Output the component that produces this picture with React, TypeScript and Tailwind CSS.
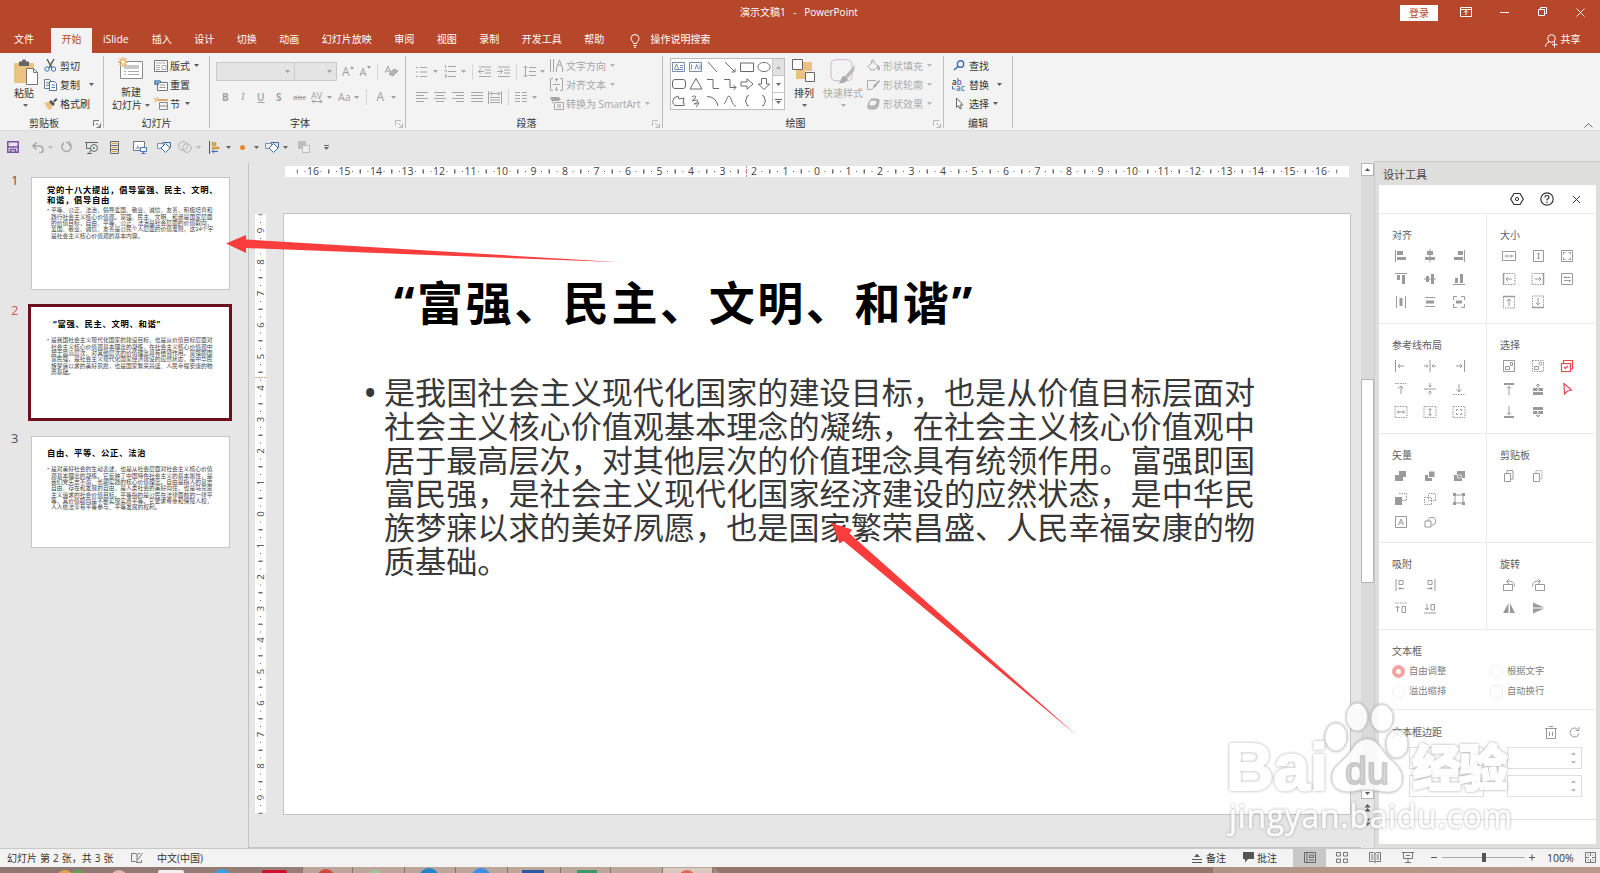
import type { ReactNode } from "react";

const TABS = ["插入", "设计", "切换", "动画", "幻灯片放映", "审阅", "视图", "录制", "开发工具", "帮助"];

const SLIDES = [
  {
    title: ["党的十八大提出，倡导富强、民主、文明、", "和谐，倡导自由"],
    body: [
      "平等、公正、法治，倡导爱国、敬业、诚信、友善，积极培育和",
      "践行社会主义核心价值观。富强、民主、文明、和谐是国家层面",
      "的价值目标，自由、平等、公正、法治是社会层面的价值取向，",
      "爱国、敬业、诚信、友善是公民个人层面的价值准则，这24个字",
      "是社会主义核心价值观的基本内容。",
    ],
  },
  {
    title: ["“富强、民主、文明、和谐”"],
    body: [
      "是我国社会主义现代化国家的建设目标，也是从价值目标层面对",
      "社会主义核心价值观基本理念的凝练，在社会主义核心价值观中",
      "居于最高层次，对其他层次的价值理念具有统领作用。富强即国",
      "富民强，是社会主义现代化国家经济建设的应然状态，是中华民",
      "族梦寐以求的美好夙愿，也是国家繁荣昌盛、人民幸福安康的物",
      "质基础。",
    ],
  },
  {
    title: ["自由、平等、公正、法治"],
    body: [
      "是对美好社会的生动表述，也是从社会层面对社会主义核心价值",
      "观基本理念的凝练。它反映了中国特色社会主义的基本属性，是",
      "我们党矢志不渝、长期实践的核心价值理念。自由是指人的意志",
      "自由、存在和发展的自由，是人类社会的美好向往，也是马克思",
      "主义追求的社会价值目标。平等指的是公民在法律面前的一律平",
      "等，其价值取向是不断实现实质平等。它要求尊重和保障人权，",
      "人人依法享有平等参与、平等发展的权利。",
    ],
  },
];

type SvgProps = { w: number; h: number; className?: string; children: ReactNode };

function Svg({ w, h, className = "", children }: SvgProps) {
  return (
    <svg
      width={w}
      height={h}
      viewBox={`0 0 ${w} ${h}`}
      fill="none"
      stroke="currentColor"
      className={`shrink-0 ${className}`}
      aria-hidden="true"
    >
      {children}
    </svg>
  );
}

function Caret({ className = "" }: { className?: string }) {
  return (
    <Svg w={5} h={3} className={className}>
      <path d="M0 0h5L2.5 3z" fill="currentColor" stroke="none" />
    </Svg>
  );
}

function Launcher({ className = "" }: { className?: string }) {
  return (
    <Svg w={8} h={8} className={className}>
      <path d="M.5 6V.5H6M3 3l4 4M7.5 3.5v4h-4" />
    </Svg>
  );
}

function Sep({ className = "" }: { className?: string }) {
  return <span className={`h-4 w-px shrink-0 bg-[#d5d5d5] ${className}`} />;
}

/* ---------- title bar and tabs ---------- */

function TitleBar() {
  return (
    <div className="flex h-7 items-start text-[10px] leading-6 text-white">
      <div className="w-[1400px] pl-[740px] whitespace-pre [word-spacing:1.2px]">演示文稿1  -  PowerPoint</div>
      <button className="mt-[5px] h-4 w-[38px] bg-white text-center leading-4 text-[#b7472a]">登录</button>
      <Svg w={12} h={10} className="mt-[7px] ml-[22px]">
        <path d="M.5.5h11v9H.5zM.5 2.5h11M6 8V4M4 5.5l2-2 2 2" />
      </Svg>
      <Svg w={9} h={10} className="mt-[7px] ml-[28px]">
        <path d="M0 5.5h9" />
      </Svg>
      <Svg w={10} h={10} className="mt-[7px] ml-[29px]">
        <path d="M.5 2.5h6v6h-6zM2.5 2.5v-2h6v6h-2" />
      </Svg>
      <Svg w={9} h={9} className="mt-[8px] ml-[28px]">
        <path d="M.5.5l8 8M8.500.5l-8 8" />
      </Svg>
    </div>
  );
}

function TabBar() {
  return (
    <div className="flex h-[25px] text-[10px] leading-[23px] text-white">
      <div className="w-[51px] pl-[14px]">文件</div>
      <div className="w-[41px] bg-[#f3f3f3] text-center text-[#b7472a]">开始</div>
      <div className="w-[48.500px] pl-[11px] text-[10.3px]">iSlide</div>
      {TABS.map((tab) => (
        <div key={tab} className="px-[11.250px]">
          {tab}
        </div>
      ))}
      <Svg w={10} h={14} className="mt-[6px] ml-[14px]">
        <path d="M3.500 9.500C3.500 7.500 1 7 1 4.500a4 4 0 0 1 8 0c0 2.500-2.500 3-2.500 5zM3.500 11.500h3M4 13.300h2" />
      </Svg>
      <div className="ml-[11px] w-[894px]">操作说明搜索</div>
      <Svg w={13} h={14} className="mt-[6px]">
        <circle cx="6.500" cy="4.500" r="3.800" />
        <path d="M.5 13c0-3 1.500-4.500 4-5M9.500 8v5.500M7 10.700h5.500" />
      </Svg>
      <div className="ml-[3px]">共享</div>
    </div>
  );
}

/* ---------- ribbon ---------- */

type GroupProps = { width: string; label: string; launcher?: "dark" | "light"; children: ReactNode };

function Group({ width, label, launcher, children }: GroupProps) {
  return (
    <section className={`flex h-[78px] shrink-0 items-center ${width}`}>
      <div className="flex h-full min-w-0 flex-1 flex-col">
        <div className="flex h-[62px] pt-[3px]">{children}</div>
        <div className="flex h-4 items-center">
          <span className={`flex-1 text-center ${launcher ? "pr-[5px]" : ""}`}>{label}</span>
          {launcher === "dark" && <Launcher className="mt-0.5 mr-[2px] text-[#777]" />}
          {launcher === "light" && <Launcher className="mt-0.5 mr-[2px] text-[#bbb]" />}
        </div>
      </div>
      <span className="h-[72px] w-px bg-[#bdbdbd]" />
    </section>
  );
}

function Tool({ icon, text, caret = "", className = "" }: { icon: ReactNode; text: string; caret?: string; className?: string }) {
  return (
    <div className={`flex h-[19px] items-center whitespace-nowrap ${className}`}>
      <span className="flex w-4 shrink-0">{icon}</span>
      {text}
      {caret && <Caret className={`opacity-80 ${caret}`} />}
    </div>
  );
}

function ClipboardGroup() {
  return (
    <Group width="w-[104px]" label="剪贴板" launcher="dark">
      <div className="flex w-11 flex-col items-start pl-[14px]">
        <Svg w={24} h={26} className="mt-[3px]">
          <path d="M0 4h20v20H0z" fill="#eac282" stroke="none" />
          <path d="M5 2.500h3V.8h4v1.700h3V7H5z" fill="#666" stroke="none" />
          <path d="M12.500 9.500h7l4 4v12h-11z" fill="#fff" stroke="#777" />
          <path d="M19.500 9.500v4h4" stroke="#777" />
        </Svg>
        <span className="mt-[1px] leading-[14px]">粘贴</span>
        <Caret className="mt-[4px] ml-[9px] text-[#666]" />
      </div>
      <div>
        <Tool
          text="剪切"
          icon={
            <Svg w={13} h={13}>
              <path d="M3 0l5 9M10 0L5 9" stroke="#555" strokeWidth="1.400" />
              <circle cx="3" cy="10" r="2.200" stroke="#3b78b5" />
              <circle cx="9.500" cy="10" r="2.200" stroke="#3b78b5" />
            </Svg>
          }
        />
        <Tool
          text="复制"
          caret="ml-[9px]"
          icon={
            <Svg w={14} h={12}>
              <path d="M.5.5h5l2 2v7h-7zM2 4h3M2 6.500h3" stroke="#6b7f96" />
              <path d="M5.500 2.500h5l2 2v7h-7z" fill="#fff" stroke="#5a7594" />
              <path d="M7.500 6h3.500M7.500 8.500h3.500" stroke="#3b78b5" />
            </Svg>
          }
        />
        <Tool
          text="格式刷"
          icon={
            <Svg w={14} h={12}>
              <path d="M0 5l5-1 4 4-3 4-2-1z" fill="#eac282" stroke="none" />
              <path d="M5 4l2-2 4 4-2 2zM9 3l3-3 1.500 1.500-3 3z" fill="#555" stroke="none" />
            </Svg>
          }
        />
      </div>
    </Group>
  );
}

function SlidesGroup() {
  return (
    <Group width="w-[106px]" label="幻灯片">
      <div className="flex w-[50px] flex-col pl-2">
        <Svg w={26} h={24} className="mt-[1px] ml-[6px]">
          <path d="M2.500 4.500h22v17h-22z" fill="#fff" stroke="#8a8a8a" />
          <path d="M6 8h15v4H6z" fill="#c9c9c9" stroke="none" />
          <path d="M6 14.500h2M10 14.500h11M6 17.500h2M10 17.500h11" stroke="#aaa" />
          <path d="M5 0v10M0 5h10M1.500 1.500l7 7M8.500 1.500l-7 7" stroke="#e5a84c" strokeWidth="1.300" />
          <circle cx="5" cy="5" r="1.800" fill="#fff" stroke="none" />
        </Svg>
        <span className="mt-[5px] ml-[9px] leading-[13px]">新建</span>
        <span className="flex items-center leading-[13px] whitespace-nowrap">
          幻灯片
          <Caret className="ml-[3px] text-[#666]" />
        </span>
      </div>
      <div>
        <Tool
          text="版式"
          caret="ml-[4px]"
          icon={
            <Svg w={14} h={12}>
              <path d="M.5.5h13v11H.5z" fill="#fff" stroke="#777" />
              <path d="M2 3h10M2 5.500h4M2 7.500h4M2 9.500h4M8 5.500h4v4H8z" stroke="#999" strokeWidth=".8" />
            </Svg>
          }
        />
        <Tool
          text="重置"
          icon={
            <Svg w={14} h={12}>
              <path d="M3.500 3.500h10v8h-10z" fill="#fff" stroke="#777" />
              <path d="M5.500 6h6M5.500 8.500h6" stroke="#999" />
              <path d="M1 5c0-3 4-4.500 6-2M1 1v4h4" stroke="#3b78b5" strokeWidth="1.300" />
            </Svg>
          }
        />
        <Tool
          text="节"
          caret="ml-[5px]"
          icon={
            <Svg w={14} h={13}>
              <path d="M4 3h10" stroke="#d98f3e" strokeWidth="1.500" />
              <path d="M5.500 5.500h8v7h-8zM5.500 9h8" stroke="#888" />
              <path d="M0 1l4 3M4 0L1 5" stroke="#e5a84c" />
            </Svg>
          }
        />
      </div>
    </Group>
  );
}

function FontGroup() {
  return (
    <Group width="w-[196px]" label="字体" launcher="light">
      <div className="w-full pl-[6px] text-[#a0a0a0]">
        <div className="mt-[6px] flex h-[19px] items-center">
          <div className="flex h-[19px] w-[79px] items-center justify-end border border-[#cacaca] bg-[#e4e4e4] pr-1">
            <Caret />
          </div>
          <div className="-ml-px flex h-[19px] w-[43px] items-center justify-end border border-[#cacaca] bg-[#e4e4e4] pr-1">
            <Caret />
          </div>
          <span className="ml-[5px] text-[12px]">A</span>
          <Svg w={4} h={3} className="-mt-2">
            <path d="M0 3l2-3 2 3z" fill="currentColor" stroke="none" />
          </Svg>
          <span className="ml-[6px] text-[11px]">A</span>
          <Svg w={4} h={3} className="-mt-2">
            <path d="M0 0l2 3 2-3z" fill="currentColor" stroke="none" />
          </Svg>
          <Sep className="ml-[6px]" />
          <Svg w={13} h={13} className="ml-[7px]">
            <path d="M0 8l3-7 3 7M1 6h4" />
            <path d="M4 9l5-5 4 2-5 5z" fill="#b5b5b5" />
          </Svg>
        </div>
        <div className="mt-[7px] flex h-[18px] items-center text-[10px] whitespace-nowrap">
          <b className="ml-[6px] w-[17px]">B</b>
          <i className="w-[18px] font-serif">&nbsp;I</i>
          <span className="w-[19px] font-semibold underline">U</span>
          <b className="w-[17px]">S</b>
          <span className="w-[18px] text-[8px] line-through">abc</span>
          <span className="flex flex-col">
            <span className="h-[8px] text-[9px] leading-[9px]">AV</span>
            <Svg w={12} h={5}>
              <path d="M1 2.500h10M3 .5l-2 2 2 2M9 .5l2 2-2 2" />
            </Svg>
          </span>
          <Caret className="ml-[4px]" />
          <span className="ml-[6px] text-[10.500px]">Aa</span>
          <Caret className="ml-[4px]" />
          <Sep className="ml-[7px]" />
          <span className="ml-[9px] text-[12px]">A</span>
          <Caret className="ml-[7px]" />
        </div>
      </div>
    </Group>
  );
}

function ParagraphGroup() {
  return (
    <Group width="w-[257px]" label="段落" launcher="light">
      <div className="flex w-full text-[#a6a6a6]">
        <div className="w-[144px] shrink-0 pl-[10px]">
          <div className="mt-[6px] flex h-[19px] items-center">
            <Svg w={12} h={12}>
              <path d="M0 1.500h2M4 1.500h7M0 6h2M4 6h7M0 10.500h2M4 10.500h7" strokeWidth="1.200" />
            </Svg>
            <Caret className="ml-[5px]" />
            <Svg w={12} h={13} className="ml-[6px]">
              <path d="M1.500 0v3M4 1.500h8M.5 5.500h2v2M4 6.500h8M.5 10h2v2h-2M4 11.500h8" />
            </Svg>
            <Caret className="ml-[5px]" />
            <Sep className="ml-[6px]" />
            <Svg w={14} h={12} className="ml-[5px]">
              <path d="M1 1h12M7 4h6M7 7h6M1 10.500h12M0 5.500h6M3 3L.5 5.500 3 8" />
            </Svg>
            <Svg w={14} h={12} className="ml-[5px]">
              <path d="M1 1h12M7 4h6M7 7h6M1 10.500h12M0 5.500h6M3 3l2.500 2.500L3 8" />
            </Svg>
            <Sep className="ml-[5px]" />
            <Svg w={13} h={13} className="ml-[6px]">
              <path d="M2.500 1v11M.5 3l2-2 2 2M.5 10l2 2 2-2M6 2.500h7M6 6.500h7M6 10.500h7" />
            </Svg>
            <Caret className="ml-[4px]" />
          </div>
          <div className="mt-[7px] flex h-[18px] items-center">
            <Svg w={12} h={10}>
              <path d="M0 .5h12M0 3.500h8M0 6.500h12M0 9.500h8" />
            </Svg>
            <Svg w={12} h={10} className="ml-[6px]">
              <path d="M0 .5h12M2 3.500h8M0 6.500h12M2 9.500h8" />
            </Svg>
            <Svg w={12} h={10} className="ml-[6px]">
              <path d="M0 .5h12M4 3.500h8M0 6.500h12M4 9.500h8" />
            </Svg>
            <Svg w={12} h={10} className="ml-[7px]">
              <path d="M0 .5h12M0 3.500h12M0 6.500h12M0 9.500h12" />
            </Svg>
            <Svg w={14} h={13} className="ml-[5px]">
              <path d="M.5 0v13M13.500 0v13M2 2.500h10M4 .5l-2 2 2 2M10 .5l2 2-2 2M2 6.500h10M2 9h10M2 11.500h10" />
            </Svg>
            <Sep className="ml-[6px]" />
            <Svg w={12} h={10} className="ml-[6px]">
              <path d="M0 .5h5M7 .5h5M0 3.500h5M7 3.500h5M0 6.500h5M7 6.500h5M0 9.500h5M7 9.500h5" />
            </Svg>
            <Caret className="ml-[5px]" />
          </div>
        </div>
        <div>
          <Tool
            text="文字方向"
            caret="ml-[4px]"
            icon={
              <Svg w={13} h={13}>
                <path d="M.5 0v13M3.500 0v13M6.500 8v5M7 8l2.500-7L12 8M8 6h3M12.500 8v5" />
              </Svg>
            }
          />
          <Tool
            text="对齐文本"
            caret="ml-[4px]"
            icon={
              <Svg w={13} h={13}>
                <path d="M3 .5H.5v12H3M10 .5h2.500v12H10M3 6.500h7M6.500 0v4M5 2l1.500-1.500L8 2M6.500 9v4M5 11l1.500 1.500L8 11" />
              </Svg>
            }
          />
          <Tool
            text="转换为 SmartArt"
            caret="ml-[4px]"
            icon={
              <Svg w={14} h={13}>
                <path d="M0 0h9l2 3-3 1H3v3z" fill="#a6a6a6" stroke="none" />
                <path d="M4.500 5.500h9v7h-9zM7 8h4M7 10h4" />
              </Svg>
            }
          />
        </div>
      </div>
    </Group>
  );
}

// Insertable shapes, row by row, each on a 14x12 canvas.
const SHAPES = [
  "M.5 1.500h12v9H.5zM2.500 8l2-5 2 5M8 4.500h3M8 6.500h3M2.500 8.500h8.500",
  "M.5 1.500h12v9H.5zM2.500 3.500v5M6 8.500l1.700-5 1.700 5M11 3.500v5",
  "M2 1l9 10",
  "M2 1l10 10M12 7.500V11H8.500",
  "M.5 2h13v8.500H.5z",
  "M7 1.500c8 0 8 9 0 9s-8-9 0-9z",
  "M3 1.500h8q2.500 0 2.500 2.500v4q0 2.500-2.500 2.500H3Q.5 10.500.5 8V4Q.5 1.500 3 1.500z",
  "M7 .5l6 10.500H1z",
  "M1 1.500h6v9h6",
  "M1 1.500h6v8h6M10.500 7l2.500 2.500L10.500 12",
  "M1 4h6V.8L13 6l-6 5.200V8H1z",
  "M4.500.5h5V6h3.200L7 11.500 1.300 6h3.200z",
  "M2 3l4-2 1 3 5-1-1 5q2 0 1 2.500H3Q-1 8 2 3z",
  "M3 2c4-3 5 1 1 3s5-1 5 1-6 3-3 3 2-2 4-1l-3 4",
  "M1 1.500q9 0 11 9.500",
  "M1 9c2-1 3-8 5-8s3 10 7 10",
  "M9 .5Q6.500.5 6.500 3T5 6q1.500 0 1.500 2.500T9 11",
  "M5 .5Q7.500.5 7.500 3T9 6Q7.500 6 7.500 8.500T5 11",
];

function DrawingGroup() {
  return (
    <Group width="w-[281px]" label="绘图" launcher="light">
      <div className="mt-[2px] ml-[7px] flex h-[52px] w-[115px] shrink-0 border border-[#bcbcbc] bg-white text-[#6a6a6a]">
        <div className="grid w-[101px] shrink-0 grid-cols-6 place-items-center">
          {SHAPES.map((d, i) => (
            <Svg key={d} w={14} h={12} className={i < 2 ? "text-[#54749b]" : ""}>
              <path d={d} strokeWidth={i < 2 ? 0.8 : 1} />
            </Svg>
          ))}
        </div>
        <div className="flex flex-1 flex-col divide-y divide-[#c6c6c6] border-l border-[#c6c6c6]">
          <span className="flex flex-1 items-center justify-center bg-[#e2e2e2] text-[#aaa]">
            <Caret className="rotate-180" />
          </span>
          <span className="flex flex-1 items-center justify-center">
            <Caret />
          </span>
          <span className="flex flex-1 flex-col items-center justify-center gap-px">
            <span className="h-px w-[7px] bg-[#666]" />
            <Caret />
          </span>
        </div>
      </div>
      <div className="flex w-[36px] shrink-0 flex-col items-center pl-[2px]">
        <Svg w={24} h={24} className="mt-[3px]">
          <path d="M11 3h9v9h-9zM4 11h9v9H4z" fill="#eac282" stroke="none" />
          <path d="M.5.5h10v10H.5zM13.500 13.500h9v9h-9z" fill="#fff" stroke="#666" />
        </Svg>
        <span className="mt-[3px] leading-[14px]">排列</span>
        <Caret className="mt-[4px] text-[#666]" />
      </div>
      <div className="flex w-[44px] shrink-0 flex-col items-center whitespace-nowrap text-[#ababab]">
        <Svg w={26} h={26} className="mt-[3px]">
          <path d="M6 .7h11q5 0 5 5v11q0 5-5 5H6q-5 0-5-5v-11q0-5 5-5z" stroke="#c9bcc8" />
          <path d="M25 6l-1 6-6 7-3-2z" fill="#b9b9b9" stroke="none" />
          <path d="M15 17l3 3q-2 5-10 4 3-1 3-4 1-3 4-3z" fill="#aaa" stroke="none" />
        </Svg>
        <span className="mt-[1px] leading-[14px]">快速样式</span>
        <Caret className="mt-[4px]" />
      </div>
      <div className="ml-[2px] text-[#ababab]">
        <Tool
          text="形状填充"
          caret="ml-[4px]"
          icon={
            <Svg w={13} h={13}>
              <path d="M1 7.500l5-5 5 5-4 3.500H4zM4.500 4V1.500Q5.500 0 7 1.500V3" />
              <path d="M11 6l2 4-2 1z" fill="currentColor" />
            </Svg>
          }
        />
        <Tool
          text="形状轮廓"
          caret="ml-[4px]"
          icon={
            <Svg w={13} h={12}>
              <path d="M9 1.500H.5v9H4L10 6" />
              <path d="M6 7l6-6 1 1.500-6 6z" fill="currentColor" stroke="none" />
            </Svg>
          }
        />
        <Tool
          text="形状效果"
          caret="ml-[4px]"
          icon={
            <Svg w={13} h={12}>
              <path d="M4 1h6q3 0 2 3l-1 4q-1 3-3 3H2Q0 10 1 7z" fill="#b8b8b8" />
              <path d="M4 2h4q3 0 2 3T6 8H3Q1 8 2 5t2-3z" fill="#f3f3f3" />
            </Svg>
          }
        />
      </div>
    </Group>
  );
}

function EditingGroup() {
  return (
    <Group width="w-[69px]" label="编辑">
      <div className="pl-[9px]">
        <Tool
          text="查找"
          icon={
            <Svg w={12} h={11}>
              <circle cx="7.500" cy="4" r="3.200" stroke="#3b6fb5" strokeWidth="1.400" />
              <path d="M5 6.500L1 10" stroke="#3b6fb5" strokeWidth="1.600" />
            </Svg>
          }
        />
        <Tool
          text="替换"
          caret="ml-[8px]"
          icon={
            <span className="-ml-px flex flex-col text-[8px] leading-[6px] font-semibold">
              <span>
                a<span className="text-[#8a4fb0]">b</span>
              </span>
              <span className="flex text-[#3b78b5]">
                <Svg w={4} h={6}>
                  <path d="M.5 1v3H3" />
                </Svg>
                ac
              </span>
            </span>
          }
        />
        <Tool
          text="选择"
          caret="ml-[4px]"
          icon={
            <Svg w={12} h={13}>
              <path d="M3.500 1v9.500l2-2 1.500 3.500 1.500-.7L7 8h3z" fill="#fff" stroke="#666" />
            </Svg>
          }
        />
      </div>
    </Group>
  );
}

function Ribbon() {
  return (
    <div className="flex h-[78px] border-b border-[#dadada] bg-[#f3f3f3] text-[10px] leading-4 text-[#333]">
      <ClipboardGroup />
      <SlidesGroup />
      <FontGroup />
      <ParagraphGroup />
      <DrawingGroup />
      <EditingGroup />
      <Svg w={9} h={5} className="mt-[70px] ml-[571px]">
        <path d="M.5 4.500l4-4 4 4" stroke="#666" />
      </Svg>
    </div>
  );
}

function QuickAccess() {
  return (
    <div className="flex h-8 items-center text-[#666]">
      <Svg w={12} h={12} className="ml-[7px]">
        <path d="M.8.8h10.400v10.400H.8zM.8 6h10.400M3.500 11V8.500h5V11" stroke="#7a4fa8" strokeWidth="1.500" />
      </Svg>
      <Svg w={12} h={11} className="ml-[13px] text-[#a9a9a9]">
        <path d="M1 4h6q4 0 4 3.500T7 11M4.500.5L1 4l3.500 3.500" strokeWidth="1.600" />
      </Svg>
      <Caret className="ml-[4px] text-[#bbb]" />
      <Svg w={11} h={12} className="ml-[8px] text-[#a9a9a9]">
        <path d="M3 2a4.600 4.600 0 1 0 5 0M8.500 5V1.500H5" strokeWidth="1.500" />
      </Svg>
      <Svg w={13} h={13} className="ml-[13px]">
        <path d="M0 1.500h13M1.500 1.500v6h4M3.500 12.500L6 9M2 12.500h5" />
        <circle cx="9" cy="7" r="3.500" fill="#e6e6e6" />
        <path d="M8 5.500l2.500 1.500L8 8.500z" fill="#4a9a80" stroke="none" />
      </Svg>
      <Svg w={9} h={13} className="ml-[12px]">
        <path d="M.5.500h8v12h-8zM.5 4.500h8M.5 8.500h8" />
        <path d="M2 2.500h5M2 6.500h5M2 10.500h5" stroke="#e0a040" />
      </Svg>
      <Svg w={14} h={13} className="ml-[14px]">
        <path d="M.5.500h11v9H.5z" fill="#fff" stroke="#777" />
        <path d="M2 8l3-4 3 4z" fill="#bbb" stroke="none" />
        <path d="M7.500 6.500h6v4h-6zM10.500 10.500v2M8.500 12.500h4" fill="#fff" stroke="#3b78b5" />
      </Svg>
      <Svg w={14} h={12} className="ml-[10px]">
        <path d="M5.500 1.500h8v5l-3 2" stroke="#3b6fa5" />
        <path d="M.5 2.500h6v5h-6z" fill="#eef3fa" stroke="#7d93ad" />
        <path d="M4 7l4.500-4.500L13 7l-4.500 4.500z" fill="#fff" stroke="#3b6fa5" />
      </Svg>
      <Svg w={14} h={12} className="ml-[7px] text-[#b3b3b3]">
        <circle cx="5" cy="5" r="4.300" />
        <circle cx="9" cy="7" r="4.300" />
      </Svg>
      <Caret className="ml-[4px] text-[#bbb]" />
      <Svg w={11} h={13} className="ml-[8px]">
        <path d="M.5 0v13" stroke="#555" />
        <path d="M3 1.500h4v3H3zM3 6h7v2H3z" fill="#e0a040" stroke="#c99b50" strokeWidth=".7" />
        <path d="M3 10.500h6M5 8.500l-2 2 2 2" stroke="#3b6fa5" />
      </Svg>
      <Caret className="ml-[6px]" />
      <span className="ml-[9px] size-[5px] rounded-full bg-[#e8862e]" />
      <Caret className="ml-[9px]" />
      <Svg w={14} h={12} className="ml-[6px]">
        <path d="M5.500 1.500h8v5l-3 2" stroke="#3b6fa5" />
        <path d="M.5 2.500h6v5h-6z" fill="#eef3fa" stroke="#7d93ad" />
        <path d="M4 7l4.500-4.500L13 7l-4.500 4.500z" fill="#fff" stroke="#3b6fa5" />
      </Svg>
      <Caret className="ml-[4px]" />
      <Svg w={12} h={12} className="ml-[10px]">
        <path d="M.5.500h7v7h-7z" fill="#bdbdbd" stroke="#bdbdbd" />
        <path d="M4.500 4.500h7v7h-7z" fill="#eee" stroke="#bdbdbd" />
      </Svg>
      <span className="ml-[14px] flex flex-col items-center gap-px">
        <span className="h-px w-[5px] bg-[#666]" />
        <Caret />
      </span>
    </div>
  );
}

/* ---------- slide pane ---------- */

function Thumb({ index, frame, titleClass, bodyClass }: { index: number; frame: string; titleClass: string; bodyClass: string }) {
  const slide = SLIDES[index];
  return (
    <div className={`bg-white whitespace-nowrap ${frame}`}>
      <div className={`text-[8.300px] leading-[10.400px] font-bold tracking-[0.720px] text-black ${titleClass}`}>
        {slide.title.map((line) => (
          <div key={line}>{line}</div>
        ))}
      </div>
      <div className={`flex text-[5.780px] leading-[6.300px] text-[#444] ${bodyClass}`}>
        <span className="w-[4px]">•</span>
        <div>
          {slide.body.map((line) => (
            <div key={line}>{line}</div>
          ))}
        </div>
      </div>
    </div>
  );
}

function ThumbPane() {
  return (
    <div className="w-[248px] shrink-0 text-[13px] leading-4 text-[#555]">
      <div className="flex pt-[14px]">
        <span className="-mt-[5px] w-[31px] pl-[11px]">1</span>
        <Thumb index={0} frame="h-[113px] w-[199px] border border-[#c6c6c6]" titleClass="pt-[6.500px] pl-[15px]" bodyClass="pt-[2px] pl-[15px]" />
      </div>
      <div className="mt-[14px] flex">
        <span className="-mt-[2px] w-[28px] pl-[11px] text-[#d0574a]">2</span>
        <Thumb index={1} frame="h-[117px] w-[204px] border-3 border-[#6d0f1c]" titleClass="pt-[12px] pl-[22px]" bodyClass="pt-[8px] pl-[16px]" />
      </div>
      <div className="mt-[15px] flex">
        <span className="-mt-[6px] w-[31px] pl-[11px]">3</span>
        <Thumb index={2} frame="h-[112px] w-[199px] border border-[#c6c6c6]" titleClass="pt-[11px] pl-[15px]" bodyClass="pt-[8px] pl-[15px]" />
      </div>
    </div>
  );
}

/* ---------- rulers and editing canvas ---------- */

const UNIT = 31.5;

function RulerMarks({ count, middle, turned }: { count: number; middle: number; turned?: boolean }) {
  const marks = Array.from({ length: count * 2 + 1 }, (_, i) => i - count);
  return (
    <>
      {marks.map((n) => {
        const at = middle + n * UNIT;
        return (
          <g key={n}>
            <text x={at} y={turned ? 8.5 : 8.7} textAnchor="middle" fontSize={turned ? 9.5 : 10.5} fill="#444" stroke="none">
              {Math.abs(n)}
            </text>
            <path d={`M${at - 8.5} 5.500h1M${at + 7.5} 5.500h1M${at + UNIT / 2} 3.500v4M${at - UNIT / 2} 3.500v4`} stroke="#666" />
          </g>
        );
      })}
    </>
  );
}

function Editor() {
  const slide = SLIDES[1];
  return (
    <div className="flex w-[1113px] shrink-0 flex-col border-b border-l border-[#c3c3c3]">
      <div className="mt-[3px] ml-[36px] h-[11px] w-[1064px] bg-white">
        <Svg w={1064} h={11} className="overflow-visible">
          <RulerMarks count={16} middle={532} />
          <path d="M461.500 0v11" stroke="#d98080" strokeDasharray="2 1" />
        </Svg>
      </div>
      <div className="mt-[37px] flex">
        <div className="ml-[6px] h-[599px] w-[11px] bg-white">
          <Svg w={11} h={599} className="overflow-visible">
            <g transform="translate(0 599) rotate(-90)">
              <RulerMarks count={9} middle={299} turned />
            </g>
            <path d="M0 163.500h11" stroke="#d9a080" strokeDasharray="2 1" />
          </Svg>
        </div>
        <div className="-mt-px ml-[17px] h-[602px] w-[1068px] border border-[#c3c3c3] bg-white whitespace-nowrap">
          <h1 className="mt-[56px] ml-[110px] text-[46px] leading-[64px] font-bold tracking-[2.600px] text-black">
            {slide.title[0]}
          </h1>
          <div className="mt-[42px] ml-[79px] flex text-[31.120px] leading-[33.800px] text-[#383838]">
            <span className="w-[21px] text-[38px]">•</span>
            <div>
              {slide.body.map((line) => (
                <div key={line}>{line}</div>
              ))}
            </div>
          </div>
        </div>
      </div>
    </div>
  );
}

function ScrollBar() {
  return (
    <div className="flex w-[13px] shrink-0 flex-col items-center text-[#555]">
      <div className="flex h-[13px] w-full items-center justify-center border border-[#b5b5b5] bg-white">
        <Caret className="rotate-180" />
      </div>
      <div className="flex h-[611px] w-full flex-col bg-[#dadada] pt-[203px]">
        <div className="h-[204px] border border-[#b5b5b5] bg-white" />
      </div>
      <div className="flex h-[12px] w-full items-center justify-center border border-[#b5b5b5] bg-white">
        <Caret />
      </div>
      <Svg w={7} h={8} className="mt-[5px]">
        <path d="M3.500 0l3 3.500h-6zM3.500 4l3 3.500h-6z" fill="currentColor" stroke="none" />
      </Svg>
      <Svg w={7} h={8} className="mt-[6px]">
        <path d="M3.500 4l3-3.500h-6zM3.500 8l3-3.500h-6z" fill="currentColor" stroke="none" />
      </Svg>
    </div>
  );
}

/* ---------- design tools panel ---------- */

const F = { fill: "currentColor", stroke: "none" };
const DASH = { strokeDasharray: "1.500 1" };

const ALIGN = [
  <path d="M1 1h1v12H1zM3 2h6v4H3zM3 8h9v3H3z" {...F} />,
  <path d="M6.500 0h1v13h-1zM4 2h6v4H4zM2 8h10v3H2z" {...F} />,
  <path d="M12 1h1v12h-1zM6 2h5v4H6zM2 8h9v3H2z" {...F} />,
  <path d="M1 1h12v1H1zM3 3h3v5H3zM8 3h3v9H8z" {...F} />,
  <path d="M1 6.500h12v1H1zM3 4h3v6H3zM8 2h3v10H8z" {...F} />,
  <path d="M1 12h12v1H1zM3 6h3v5H3zM8 2h3v9H8z" {...F} />,
  <path d="M2 1h1v12H2zM11 1h1v12h-1zM5.500 3h3v8h-3z" {...F} />,
  <path d="M2 2h10v1H2zM2 11h10v1H2zM3 5.500h8v3H3z" {...F} />,
  <>
    <path d="M5 1.500H1.500V5M9 1.500h3.500V5M1.500 9v3.500H5M12.500 9v3.500H9" />
    <path d="M4 5.500h6v3H4z" {...F} />
  </>,
];

const SIZE = [
  <path d="M.5 2.500h13v9H.5zM3.500 7h7M5 5.500L3.500 7 5 8.500M9 5.500L10.500 7 9 8.500" />,
  <path d="M2.500 1.500h10v11h-10zM7.500 4v6M6 5.500L7.500 4 9 5.500M6 8.500L7.500 10 9 8.500" />,
  <>
    <path d="M1.500 1.500h11v11h-11z" />
    <path d="M3.500 5.500v-2h2M8.500 3.500h2v2M3.500 8.500v2h2M8.500 10.500h2v-2" />
  </>,
  <>
    <path d="M1.500 1v12" strokeWidth="1.500" />
    <path d="M2 1.500h11v11H2" {...DASH} />
    <path d="M4 7h6M6 5L4 7l2 2" />
  </>,
  <>
    <path d="M12.500 1v12" strokeWidth="1.500" />
    <path d="M12 1.500H1v11h11" {...DASH} />
    <path d="M4 7h6M8 5l2 2-2 2" />
  </>,
  <path d="M1.500 1.500h11v11h-11zM4 5.500h6.500M5.500 4L4 5.500M10.500 8.500H4M9 10l1.500-1.500" />,
  <>
    <path d="M1 1.500h12" strokeWidth="1.500" />
    <path d="M1.500 2v11h11V2" {...DASH} />
    <path d="M7 11V4M5 6l2-2 2 2" />
  </>,
  <>
    <path d="M1 12.500h12" strokeWidth="1.500" />
    <path d="M1.500 12V1h11v11" {...DASH} />
    <path d="M7 3v7M5 8l2 2 2-2" />
  </>,
];

const GUIDES = [
  <path d="M1.500 1v12M4 7h6M6 5L4 7l2 2" />,
  <path d="M7 1v12M1 7h4M3.500 5.500L5 7 3.500 8.500M13 7H9M10.500 5.500L9 7l1.500 1.500" />,
  <path d="M12.500 1v12M4 7h6M8 5l2 2-2 2" />,
  <>
    <path d="M1 1.500h12" {...DASH} />
    <path d="M7 12V4M4.500 6.500L7 4l2.500 2.500" />
  </>,
  <path d="M1 7h12M7 1v4M5.500 3.500L7 5l1.500-1.500M7 13V9M5.500 10.500L7 9l1.500 1.500" />,
  <>
    <path d="M1 12.500h12" {...DASH} />
    <path d="M7 2v8M4.500 7.500L7 10l2.500-2.500" />
  </>,
  <>
    <path d="M1 1.500h12v11H1z" {...DASH} />
    <path d="M3.500 7h7M5 5.500L3.500 7 5 8.500M9 5.500L10.500 7 9 8.500" />
  </>,
  <>
    <path d="M1 1.500h12v11H1z" {...DASH} />
    <path d="M7 3.500v7M5.500 5L7 3.500 8.500 5M5.500 9L7 10.500 8.500 9" />
  </>,
  <>
    <path d="M1 1.500h12v11H1z" {...DASH} />
    <path d="M4.500 6V4.500H6M8 4.500h1.500V6M4.500 8v1.500H6M8 9.500h1.500V8" />
  </>,
];

const SELECT = [
  <path d="M1.500 1.500h11v11h-11zM3.500 7.500h4v3h-4zM8.500 3.500h2v3h-2z" />,
  <>
    <path d="M1.500 1.500h11v11h-11z" {...DASH} />
    <path d="M3.500 7.500h4v3h-4z" />
    <circle cx="9.500" cy="4.500" r="1.500" />
  </>,
  <path d="M1.500 4.500h9v8h-9zM3.500 4V1.500h9v8.500h-2M4 8l1.500 1.500L8 7" stroke="#e8474f" strokeWidth="1.200" />,
  <>
    <path d="M2 2h10" strokeWidth="2" />
    <path d="M7 13V4M5 6.500L7 4.500l2 2" />
  </>,
  <>
    <path d="M2 6h4v3H2zM8 6h4v3H8zM2 10h10v3H2z" {...F} />
    <path d="M7 9V2M5 4l2-2 2 2" />
  </>,
  <path d="M4 1.500L11.500 8 7.500 9 4.500 12z" stroke="#e8474f" strokeWidth="1.200" />,
  <>
    <path d="M2 12h10" strokeWidth="2" />
    <path d="M7 1v9M5 7.500l2 2 2-2" />
  </>,
  <>
    <path d="M2 2h10v3H2zM2 6h4v3H2zM8 6h4v3H8z" {...F} />
    <path d="M7 6v6M5 10l2 2 2-2" />
  </>,
];

const VECTOR = [
  <path d="M5 2h7v6H9v4H1V6h4z" {...F} />,
  <>
    <path d="M2 6h7v6H2z" {...F} />
    <path d="M5.500 2h6.500v6.500H5.500z" fill="currentColor" stroke="#fff" />
  </>,
  <>
    <path d="M5 2h8v7h-3v3H2V6h3z" {...F} />
    <path d="M5.500 6h4v3h-4z" stroke="#ddd" />
  </>,
  <>
    <path d="M1 5h7v8H1z" {...F} />
    <path d="M5 1.500h7.500v7H8" {...DASH} />
  </>,
  <>
    <path d="M1.500 5.500h7v7h-7z" {...DASH} />
    <path d="M5.500 1.500h7v7h-7z" {...DASH} />
  </>,
  <>
    <path d="M3 3h8v8H3z" />
    <path d="M1 1h3v3H1zM10 1h3v3h-3zM1 10h3v3H1zM10 10h3v3h-3z" {...F} />
  </>,
  <path d="M1.500 1.500h11v11h-11zM4.500 10L7 4l2.500 6M5.500 8h3" />,
  <>
    <path d="M2 6h6v6H2z" />
    <path d="M5 6a3.800 3.800 0 1 1 3.500 4" />
  </>,
];

const CLIPS = [
  <path d="M2.500 4.500h6v8h-6zM5 4V1.500h6V10H8.500" />,
  <>
    <path d="M2.500 4.500h6v8h-6z" />
    <path d="M5 4V1.500h6V10H8.500" stroke="#c4c4c4" />
  </>,
];

const SNAP = [
  <path d="M2 1v12M5 2.500h4v4H5zM10 10.500H5M6.500 9L5 10.500 6.500 12" />,
  <path d="M12 1v12M5 2.500h4v4H5zM4 10.500h5M7.500 9L9 10.500 7.500 12" />,
  <>
    <path d="M1 2h12" {...DASH} />
    <path d="M3.500 11V5M1.500 7l2-2 2 2M8 5.500h3.500v6H8z" />
  </>,
  <path d="M1 12h12M4 3v6M2 7l2 2 2-2M8 3.500h3.500V9H8z" />,
];

const ROTATE = [
  <path d="M1.500 6.500h9v6h-9zM5 3.500q7-2 7.500 5M7 1L4.500 3.500 7 6" />,
  <path d="M4.500 6.500h9v6h-9zM9 3.500Q2 1.500 1.500 8.500M7 1l2.500 2.500L7 6" />,
  <path d="M6.500 2v10H1zM8 2v10h5z" {...F} />,
  <path d="M2 1.500l11 5H2zM2 7.500h11l-11 5z" {...F} />,
];

function ToolGrid({ title, icons, wide = false }: { title: string; icons: ReactNode[]; wide?: boolean }) {
  return (
    <section className="pt-[13px] pl-[13px]">
      <h3 className="leading-4">{title}</h3>
      <div
        className={`mt-[6px] -ml-[6px] grid w-[88px] justify-items-center gap-y-[9px] text-[#9a9a9a] ${
          wide ? "grid-cols-[29px_29px]" : "grid-cols-3"
        }`}
      >
        {icons.map((icon, i) => (
          <Svg key={i} w={14} h={14}>
            {icon}
          </Svg>
        ))}
      </div>
    </section>
  );
}

function Radio({ label, on = false, square = false }: { label: string; on?: boolean; square?: boolean }) {
  return (
    <label className="flex h-5 items-center text-[9.300px] text-[#808080]">
      <span
        className={`mr-[4px] flex size-[13px] items-center justify-center border ${square ? "rounded-sm" : "rounded-full"} ${
          on ? "border-[#f5a3a0] bg-[#f5a3a0]" : "border-[#f0f0f0] bg-white"
        }`}
      >
        {on && <span className="size-[5px] rounded-full bg-white" />}
      </span>
      {label}
    </label>
  );
}

function Spinner({ className = "" }: { className?: string }) {
  return (
    <div className={`flex h-[22px] w-[75px] flex-col items-end justify-center gap-[6px] border border-[#dedede] bg-white pr-[5px] text-[#bdbdbd] ${className}`}>
      <Caret className="rotate-180" />
      <Caret />
    </div>
  );
}

function DesignPanel() {
  return (
    <aside className="-mt-[2px] flex w-[226px] shrink-0 flex-col border-t border-l border-[#c9c9c9] bg-[#dededc] pr-[4px] pl-[4px] text-[10px] text-[#596068]">
      <h2 className="h-[23px] pl-[4px] text-[11px] leading-[25px] text-[#444]">设计工具</h2>
      <div className="flex h-[659px] flex-col bg-white">
        <div className="flex h-[29px] items-center justify-end gap-[16px] border-b border-[#ebebeb] pr-[13px] text-[#333]">
          <Svg w={14} h={14}>
            <path d="M4 1.500h6L13.300 7 10 12.500H4L.7 7z" strokeWidth="1.200" />
            <circle cx="7" cy="7" r="1.600" />
          </Svg>
          <Svg w={14} h={14}>
            <circle cx="7" cy="7" r="6.200" strokeWidth="1.200" />
            <path d="M5 5.500q0-2 2-2t2 1.800Q9 6.500 7 7.500V8.500M7 9.800v1.200" strokeWidth="1.200" />
          </Svg>
          <Svg w={9} h={9} className="mx-[2px]">
            <path d="M1 1l7 7M8 1L1 8" />
          </Svg>
        </div>
        <div className="grid h-[416px] grid-cols-[108px_1fr] grid-rows-[110px_110px_109px_87px] [&>*]:border-b [&>*]:border-[#ebebeb] [&>*:nth-child(odd)]:border-r">
          <ToolGrid title="对齐" icons={ALIGN} />
          <ToolGrid title="大小" icons={SIZE} />
          <ToolGrid title="参考线布局" icons={GUIDES} />
          <ToolGrid title="选择" icons={SELECT} />
          <ToolGrid title="矢量" icons={VECTOR} />
          <ToolGrid title="剪贴板" icons={CLIPS} />
          <ToolGrid title="吸附" icons={SNAP} wide />
          <ToolGrid title="旋转" icons={ROTATE} wide />
        </div>
        <section className="h-[80px] border-b border-[#ebebeb] pt-[13px] pl-[13px]">
          <h3 className="leading-4">文本框</h3>
          <div className="mt-[2px] grid grid-cols-[98px_1fr]">
            <Radio label="自由调整" on />
            <Radio label="根据文字" />
            <Radio label="溢出缩排" />
            <Radio label="自动换行" square />
          </div>
        </section>
        <section className="h-[110px] border-b border-[#e2e2e2] pt-[14px] pl-[13px]">
          <div className="flex items-center">
            <h3 className="w-[153px] leading-4">文本框边距</h3>
            <Svg w={12} h={13} className="text-[#999]">
              <path d="M0 2.500h12M1.500 2.500v10h9v-10M4 .5h4M4.500 6v4M7.500 6v4" />
            </Svg>
            <Svg w={11} h={11} className="ml-[12px] text-[#999]">
              <path d="M9 2.500a4.500 4.500 0 1 0 1 4M10 0v3.500H6.500" />
            </Svg>
          </div>
          <div className="mt-[7px] grid grid-cols-[98px_75px] gap-y-[6px] pl-[17px]">
            <Spinner />
            <Spinner />
            <Spinner />
            <Spinner />
          </div>
        </section>
      </div>
    </aside>
  );
}

/* ---------- status bar and task bar ---------- */

function StatusBar() {
  return (
    <div className="flex h-[19px] items-center border-t border-[#c8c8c8] bg-[#f3f3f3] text-[10px] leading-4 whitespace-nowrap text-[#333]">
      <span className="-mt-px w-[124px] pl-[7px] [word-spacing:0.400px]">幻灯片 第 2 张，共 3 张</span>
      <Svg w={12} h={11} className="-mt-px ml-[7px] text-[#777]">
        <path d="M.5 1.500h4l1.500 1v8l-1.500-1h-4zM6 2.500l1.500-1H9M6 10.500h4.500V8M7 7.500L11.500 1" />
      </Svg>
      <span className="-mt-px ml-[14px] w-[1035px]">中文(中国)</span>
      <Svg w={10} h={10} className="-mt-px text-[#555]">
        <path d="M0 9.500h10M0 6.500h10M5 1v3" />
        <path d="M2 4l3-3 3 3z" {...F} />
      </Svg>
      <span className="-mt-px ml-[4px]">备注</span>
      <Svg w={11} h={11} className="-mt-px ml-[17px] text-[#555]">
        <path d="M0 0h11v7H5l-3 3.500V7H0z" {...F} />
      </Svg>
      <span className="-mt-px ml-[3px] w-[36px]">批注</span>
      <span className="flex h-full w-[33px] items-center justify-center bg-[#c8c8c8] text-[#666]">
        <Svg w={12} h={11} className="-mt-px">
          <path d="M.5.500h11v10H.5zM3 .5v10M5.500 3h4v2.500h-4zM5 8h5" />
        </Svg>
      </span>
      <Svg w={12} h={11} className="-mt-px ml-[10px] text-[#777]">
        <path d="M.5.500h4v3.500h-4zM7.500.5h4v3.500h-4zM.5 7h4v3.500h-4zM7.500 7h4v3.500h-4z" />
      </Svg>
      <Svg w={12} h={11} className="-mt-px ml-[21px] text-[#777]">
        <path d="M.5.500h4L6 1.500 7.500.5h4v9h-4L6 10.500 4.500 9.500h-4zM6 1v9M2 3h2.500M2 5h2.500M2 7h2.500M7.500 3H10M7.500 5H10M7.500 7H10" />
      </Svg>
      <Svg w={12} h={11} className="-mt-px ml-[21px] text-[#777]">
        <path d="M0 .5h12M1.500 1v5.500h9V1M4 3.500h4M6 6.500v4M3 10.500h6" />
      </Svg>
      <Svg w={104} h={11} className="-mt-px ml-[17px] text-[#777]">
        <path d="M0 5.500h6M98 5.500h6M101 2.500v6" stroke="#555" />
        <path d="M11 5.500h83" stroke="#aaa" />
        <path d="M51 1h4v9h-4z" fill="#555" stroke="none" />
      </Svg>
      <span className="-mt-px ml-[12px] w-[38px] text-[10.500px]">100%</span>
      <Svg w={11} h={11} className="-mt-px text-[#777]">
        <path d="M.5.500h10v10H.5zM5.500 1v3M5.500 7v3M1 5.500h3M7 5.500h3M2.500 2.500l1 1M8.500 2.500l-1 1M2.500 8.500l1-1M8.500 8.500l-1-1" />
      </Svg>
    </div>
  );
}

function TaskBar() {
  return (
    <div className="h-[6px] overflow-hidden bg-linear-to-r from-[#8d7770] via-[#a58d82] to-[#b99a8a]">
      <Svg w={1600} h={6}>
        <path d="M302 0h410v6H302z" fill="#bda79c" stroke="none" />
        <path d="M302.500 0v6M352.500 0v6M404.500 0v6M455.500 0v6M507.500 0v6M560.500 0v6M610.500 0v6M662.500 0v6M712.500 0v6" stroke="#8a7369" />
        <path d="M663 1h49v5h-49z" fill="#d9c9c0" stroke="none" />
        <path d="M713 0h500v6H720z" fill="#94766c" stroke="none" />
        <g stroke="none">
          <circle cx="65" cy="11" r="8" fill="#e0a44c" />
          <circle cx="78" cy="10" r="7" fill="#5ea452" />
          <circle cx="119" cy="11" r="8" fill="#e6b8b0" />
          <rect x="158" y="3" width="26" height="6" rx="2" fill="#f4eef2" />
          <circle cx="222" cy="11" r="9" fill="#3aa0e8" />
          <rect x="262" y="3" width="25" height="6" rx="2" fill="#d0112b" />
          <circle cx="326" cy="11" r="9" fill="#d0483c" />
          <circle cx="375" cy="11" r="8" fill="#9cc89a" />
          <circle cx="429" cy="11" r="10" fill="#2484c8" />
          <circle cx="481" cy="11" r="10" fill="#3c8ee8" />
          <rect x="522" y="3" width="22" height="6" fill="#2a5aa0" />
          <rect x="577" y="3" width="20" height="6" fill="#3a9a68" />
          <circle cx="687" cy="11" r="8" fill="#dc6a50" />
        </g>
      </Svg>
    </div>
  );
}

/* ---------- overlays ---------- */

function Arrows() {
  return (
    <svg width="1600" height="873" className="pointer-events-none absolute inset-0" aria-hidden="true">
      <path d="M226 243.500L246 235v4.500L620 262.300 246 248v5z" fill="#f93c3c" />
      <path d="M831.500 523L852 529.500 849.500 533.500 1077.500 736 843.500 541 839.500 543.500z" fill="#f93c3c" />
    </svg>
  );
}

function Watermark() {
  return (
    <svg
      width="320"
      height="150"
      className="pointer-events-none absolute top-[695px] left-[1215px] font-['Liberation_Sans','Noto_Sans_CJK_SC',sans-serif] opacity-85 drop-shadow-[0_0_1.500px_#999]"
      fill="#fff"
      stroke="#fff"
      strokeWidth="2"
      strokeLinejoin="round"
    >
      <text x="11" y="95" fontSize="66" fontWeight="700" textLength="102">
        Bai
      </text>
      <g stroke="#d0d0d0" strokeWidth="1">
        <ellipse cx="121" cy="42" rx="11" ry="14" />
        <ellipse cx="142" cy="22" rx="10.500" ry="14" />
        <ellipse cx="167" cy="23" rx="11" ry="13.500" />
        <ellipse cx="182" cy="49" rx="11" ry="14" />
        <path d="M152 44c10 0 13 9 20 17s16 12 15 24c-1 14-15 13-23 11s-16-2-24 0-22 1-23-12c-1-11 8-15 15-23s10-17 20-17z" />
      </g>
      <text x="130" y="89" fontSize="38" fontWeight="400" textLength="44" lengthAdjust="spacingAndGlyphs" fill="#d2d2d2" stroke="#c4c4c4">
        du
      </text>
      <text x="197" y="91" fontSize="49" fontWeight="900" textLength="96">
        经验
      </text>
      <text x="14" y="133" fontSize="32" textLength="283" strokeWidth=".5" className="font-['Open_Sans']">
        jingyan.baidu.com
      </text>
    </svg>
  );
}

export default function App() {
  return (
    <div className="relative flex h-[873px] w-[1600px] flex-col overflow-hidden bg-[#e6e6e6] font-['Open_Sans','Noto_Sans_CJK_SC',sans-serif]">
      <header className="bg-[#b7472a]">
        <TitleBar />
        <TabBar />
      </header>
      <Ribbon />
      <QuickAccess />
      <main className="flex h-[685px]">
        <ThumbPane />
        <Editor />
        <ScrollBar />
        <DesignPanel />
      </main>
      <StatusBar />
      <TaskBar />
      <Arrows />
      <Watermark />
    </div>
  );
}
